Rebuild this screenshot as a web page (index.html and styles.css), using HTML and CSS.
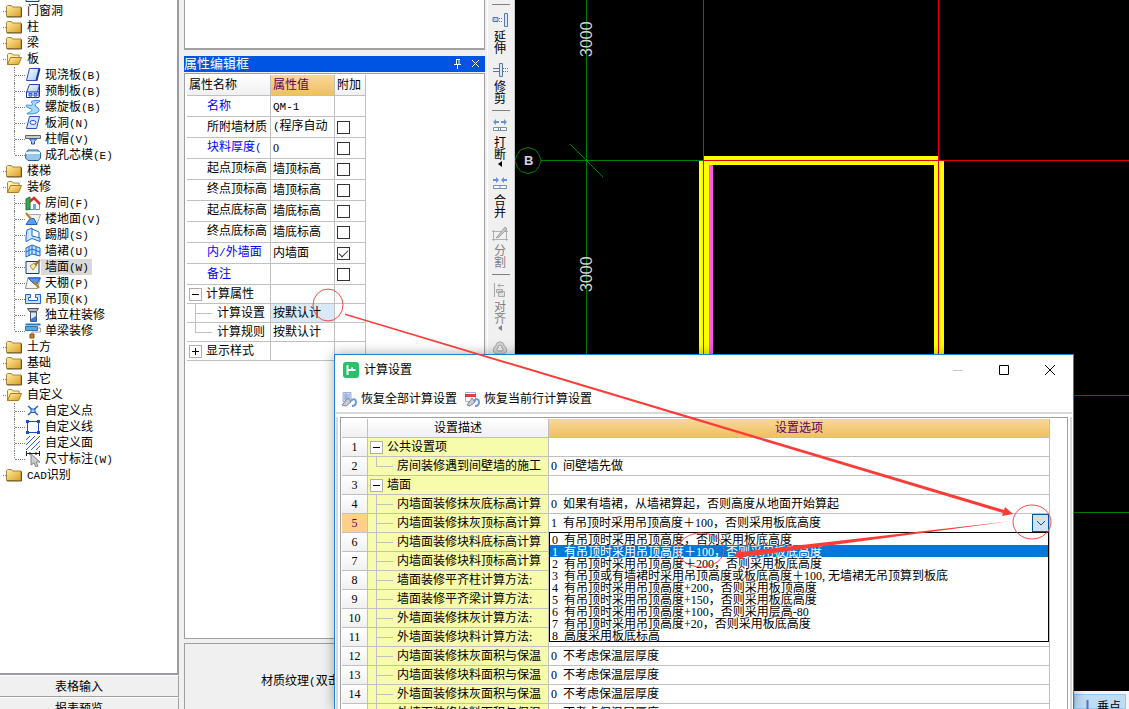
FILE: index.html
```html
<!DOCTYPE html>
<html lang="zh-CN">

<head>
    <meta charset="utf-8">
    <title>计算设置</title>
    <link rel="stylesheet" href="styles.css">
</head>

<body>
    <!-- icon definitions -->
    <svg class="defs" aria-hidden="true">
        <defs>
            <linearGradient id="gold" x1="0" y1="0" x2="1" y2="1">
                <stop offset="0" stop-color="#fff0a8" />
                <stop offset="1" stop-color="#dc9c20" />
            </linearGradient>
            <linearGradient id="sky" x1="0" y1="0" x2="1" y2="1">
                <stop offset="0" stop-color="#ffffff" />
                <stop offset="1" stop-color="#9cc8f5" />
            </linearGradient>
            <symbol id="folder" viewBox="0 0 16 16">
                <path d="M.5 13.500V3.500l1-1h4l1 1.500h8.500v9.500z" fill="url(#gold)" stroke="#a88438" />
                <path d="M15.500 4.500v9.500H1" fill="none" stroke="#6c5420" />
            </symbol>
            <symbol id="open" viewBox="0 0 16 16">
                <path d="M1.500 13.500v-10l1-1h3.500l1 1.500h6v3" fill="#fff0b0" stroke="#a08a50" />
                <path d="M1.500 13.500l3-7h11l-3 7z" fill="url(#gold)" stroke="#a87c1c" />
            </symbol>
            <symbol id="slab" viewBox="0 0 16 16">
                <path d="M4.500 1.500h10l-3 12h-10z" fill="url(#sky)" stroke="#2a50b8" />
                <path d="M11.500 13.500l3-12" stroke="#1a3a9a" stroke-width="2" />
            </symbol>
            <symbol id="precast" viewBox="0 0 16 16">
                <path d="M4.500 1.500h10l-2 8h-11z" fill="url(#sky)" stroke="#2a40b0" />
                <path d="M1.500 9h12.500v5.500H1.500z" fill="#fff" stroke="#1a30a0" />
                <path d="M14.500 1.500v12" stroke="#1a30a0" />
                <path d="M4 10.500h3v2.500H4zM9 10.500h3v2.500H9z" fill="#8cb8ff" stroke="#2a50d8" />
            </symbol>
            <symbol id="spiral" viewBox="0 0 16 16">
                <path d="M6 3c3-2 7-2 9-1-2 2-5 2-5 4s4 2 4 5-4 4-12 4c-1-1 5-2 5-4S1 9 1 7s5 0 6-1 0-2-1-3z" fill="#a8d8fa" stroke="#3a90d8" />
            </symbol>
            <symbol id="hole" viewBox="0 0 16 16">
                <path d="M4.500 1.500h10l-3 12h-10z" fill="#d4e6fc" stroke="#2a50b8" />
                <ellipse cx="8" cy="7.500" rx="3" ry="2" fill="#fff" stroke="#2a50d8" />
            </symbol>
            <symbol id="cap" viewBox="0 0 16 16">
                <path d="M.5 4.500h15v3H.5z" fill="#c8ccd0" stroke="#606468" />
                <path d="M4.500 8h7l-2 2.500v2.500h-3v-2.500z" fill="#a8c8ff" stroke="#2a50c0" />
            </symbol>
            <symbol id="core" viewBox="0 0 16 16">
                <path d="M1 6l2-3h10l2.500 3v5l-2 2.500H3L.5 11z" fill="#98c8e8" stroke="#2a60a0" />
                <path d="M1 6h14" stroke="#e8f6ff" stroke-width="2" />
            </symbol>
            <symbol id="room" viewBox="0 0 16 16">
                <path d="M4 8v6.500h10.500V7" fill="#fff" stroke="#5a90d0" />
                <path d="M3 8l6-5 6 6" fill="none" stroke="#d83028" stroke-width="2.500" />
                <path d="M1 4l4-2v12l-4 1z" fill="#3aa850" stroke="#187030" />
                <path d="M8 9h3v6H8z" fill="#68a8f0" />
            </symbol>
            <symbol id="floor" viewBox="0 0 16 16">
                <path d="M4 3.500h11.500L12 13" fill="#f0f4f8" stroke="#a8a8a8" />
                <path d="M1 13.500l4-6h4l3 6z" fill="#58a0f0" stroke="#2060c0" />
                <path d="M1 2l5 6" stroke="#b08030" stroke-width="2" />
            </symbol>
            <symbol id="skirt" viewBox="0 0 16 16">
                <path d="M1 10l1-7 5-2v8l8 2v3.500l-8-3-6 3z" fill="#d0e8ff" stroke="#1a68d0" />
                <path d="M7 2l7 3v6" fill="none" stroke="#1a68d0" />
            </symbol>
            <symbol id="dado" viewBox="0 0 16 16">
                <path d="M1 5l6-3 8 3v8l-8-2-6 3z" fill="#c4e2ff" stroke="#1a68d0" />
                <path d="M7 2v9M1 9l6-3 8 3M11 4v8M4 4v9" fill="none" stroke="#1a68d0" />
            </symbol>
            <symbol id="wall" viewBox="0 0 16 16">
                <path d="M1 2.500h13v12H1z" fill="#eaf2ff" stroke="#203870" />
                <path d="M5 7l3 4 4-5-3-2z" fill="#f8e8a0" stroke="#b09030" />
                <path d="M10 6l5-5" stroke="#a06820" stroke-width="2" />
            </symbol>
            <symbol id="ceiling" viewBox="0 0 16 16">
                <path d="M3 2.500h12.500l-3 11H.5z" fill="#f4f6f8" stroke="#909498" />
                <path d="M3 3h12l-3 6H9z" fill="#4a98f0" stroke="#1a60c8" />
                <path d="M8 6l6 7" stroke="#b08030" stroke-width="2" />
            </symbol>
            <symbol id="hung" viewBox="0 0 16 16">
                <path d="M.5 3.500h5v3h-2v3h9v-3h-2v-3h5v9H.5z" fill="#c4e2ff" stroke="#1a68d0" />
            </symbol>
            <symbol id="column" viewBox="0 0 16 16">
                <path d="M2.500 1.500h11l-2 3h-7z" fill="#b8bcc0" stroke="#505458" />
                <path d="M5.500 5h6v9.500h-6z" fill="#d8e8ff" stroke="#505870" />
                <path d="M6 12l5-3v5H6z" fill="#3a78e0" />
            </symbol>
            <symbol id="beam" viewBox="0 0 16 16">
                <path d="M.5 .5h15v2H.5z" fill="#2878b8" />
                <path d="M.5 3.500h12v4H.5z" fill="#58a8e0" stroke="#2878b8" />
                <path d="M13 5h2.500v4H7v2" fill="none" stroke="#a0a0a0" />
                <path d="M5 11h4v4H5z" fill="#c88030" stroke="#80501a" />
            </symbol>
            <symbol id="point" viewBox="0 0 16 16">
                <path d="M3 3l10 9M13 3L3 12" stroke="#2060c8" stroke-width="1.500" />
                <path d="M6 6h4v3.500H6z" fill="#a8d0ff" stroke="#2060c8" />
            </symbol>
            <symbol id="line" viewBox="0 0 16 16">
                <path d="M2.500 2.500h11v11h-11z" fill="#fff" stroke="#1850c0" />
                <path d="M1 1h3v3H1zM12 1h3v3h-3zM1 12h3v3H1zM12 12h3v3h-3z" fill="#1850c0" />
            </symbol>
            <symbol id="hatch" viewBox="0 0 16 16">
                <path d="M1 5l4-4M1 10l9-9M1 15L15 1M6 15l9-9M11 15l4-4" stroke="#2a60c8" />
            </symbol>
            <symbol id="dim" viewBox="0 0 16 16">
                <path d="M1.500 0v5M14.500 0v5M2 2.500h12M5 1v3M11 1v3" stroke="#202020" />
                <path d="M6 3l9 8h-4l2 4-2 1-2-4-3 2z" fill="#c8ccd0" stroke="#808488" />
            </symbol>
            <symbol id="restore" viewBox="0 0 16 16">
                <path d="M2 1.500h8v9H2z" fill="#d0dcf4" stroke="#a0b0d4" />
                <path d="M3 4h6M3 6h6M3 8h6M5 2v8" stroke="#8aa4dc" />
                <path d="M1 14l6-7 3 4-5 4z" fill="#c8ccd4" stroke="#808898" />
                <path d="M10 10c2-3 5-2 5 1s-2 4-4 4" fill="none" stroke="#7098d4" stroke-width="2" />
            </symbol>
            <symbol id="restorerow" viewBox="0 0 16 16">
                <path d="M1.500 1.500h10v9h-10z" fill="#fff" stroke="#a0b0d0" />
                <path d="M1 3h11v3H1z" fill="#e04038" />
                <path d="M3 14l5-7 3 4-5 4z" fill="#c8ccd4" stroke="#808898" />
                <path d="M10 10c2-3 5-2 5 1s-2 4-4 4" fill="none" stroke="#7098d4" stroke-width="2" />
            </symbol>
        </defs>
    </svg>

    <div class="app">
        <!-- component tree -->
        <div class="side">
            <div class="tree">
                <ul class="kids first">
                    <li><svg><use href="#wall" /></svg><span>幕墙</span></li>
                </ul>
                <div class="node"><svg><use href="#folder" /></svg><span>门窗洞</span></div>
                <div class="node"><svg><use href="#folder" /></svg><span>柱</span></div>
                <div class="node"><svg><use href="#folder" /></svg><span>梁</span></div>
                <div class="node"><svg><use href="#open" /></svg><span>板</span></div>
                <ul class="kids">
                    <li><svg><use href="#slab" /></svg><span>现浇板<i>(B)</i></span></li>
                    <li><svg><use href="#precast" /></svg><span>预制板<i>(B)</i></span></li>
                    <li><svg><use href="#spiral" /></svg><span>螺旋板<i>(B)</i></span></li>
                    <li><svg><use href="#hole" /></svg><span>板洞<i>(N)</i></span></li>
                    <li><svg><use href="#cap" /></svg><span>柱帽<i>(V)</i></span></li>
                    <li><svg><use href="#core" /></svg><span>成孔芯模<i>(E)</i></span></li>
                </ul>
                <div class="node"><svg><use href="#folder" /></svg><span>楼梯</span></div>
                <div class="node"><svg><use href="#open" /></svg><span>装修</span></div>
                <ul class="kids">
                    <li><svg><use href="#room" /></svg><span>房间<i>(F)</i></span></li>
                    <li><svg><use href="#floor" /></svg><span>楼地面<i>(V)</i></span></li>
                    <li><svg><use href="#skirt" /></svg><span>踢脚<i>(S)</i></span></li>
                    <li><svg><use href="#dado" /></svg><span>墙裙<i>(U)</i></span></li>
                    <li><svg><use href="#wall" /></svg><span class="current">墙面<i>(W)</i></span></li>
                    <li><svg><use href="#ceiling" /></svg><span>天棚<i>(P)</i></span></li>
                    <li><svg><use href="#hung" /></svg><span>吊顶<i>(K)</i></span></li>
                    <li><svg><use href="#column" /></svg><span>独立柱装修</span></li>
                    <li><svg><use href="#beam" /></svg><span>单梁装修</span></li>
                </ul>
                <div class="node"><svg><use href="#folder" /></svg><span>土方</span></div>
                <div class="node"><svg><use href="#folder" /></svg><span>基础</span></div>
                <div class="node"><svg><use href="#folder" /></svg><span>其它</span></div>
                <div class="node"><svg><use href="#open" /></svg><span>自定义</span></div>
                <ul class="kids">
                    <li><svg><use href="#point" /></svg><span>自定义点</span></li>
                    <li><svg><use href="#line" /></svg><span>自定义线</span></li>
                    <li><svg><use href="#hatch" /></svg><span>自定义面</span></li>
                    <li><svg><use href="#dim" /></svg><span>尺寸标注<i>(W)</i></span></li>
                </ul>
                <div class="node"><svg><use href="#folder" /></svg><span><i>CAD</i>识别</span></div>
            </div>
            <div class="tabs">
                <button type="button">表格输入</button>
                <button type="button">报表预览</button>
            </div>
        </div>

        <!-- property editor -->
        <div class="middle">
            <div class="list"></div>
            <div class="caption">
                <span>属性编辑框</span>
                <button type="button" aria-label="固定"><svg width="10" height="10"><path d="M3 .5h4M3.500 1v4M6 1v4M1 5.500h7M4.500 6v4" stroke="#fff" /></svg></button>
                <button type="button" aria-label="关闭"><svg width="10" height="10"><path d="M1 1l7 7M8 1L1 8" stroke="#fff" /></svg></button>
            </div>
            <div class="props">
                <table>
                    <thead>
                        <tr><th class="name">属性名称</th><th class="value">属性值</th><th class="extra">附加</th></tr>
                    </thead>
                    <tbody>
                        <tr><td class="blue">名称</td><td><i>QM-1</i></td><td></td></tr>
                        <tr><td>所附墙材质</td><td class="wrap"><i>(</i>程序自动</td><td><input type="checkbox" aria-label="所附墙材质"></td></tr>
                        <tr><td class="blue wrap">块料厚度<i>(</i></td><td>0</td><td><input type="checkbox" aria-label="块料厚度"></td></tr>
                        <tr><td class="wrap">起点顶标高</td><td>墙顶标高</td><td><input type="checkbox" aria-label="起点顶标高"></td></tr>
                        <tr><td class="wrap">终点顶标高</td><td>墙顶标高</td><td><input type="checkbox" aria-label="终点顶标高"></td></tr>
                        <tr><td class="wrap">起点底标高</td><td>墙底标高</td><td><input type="checkbox" aria-label="起点底标高"></td></tr>
                        <tr><td class="wrap">终点底标高</td><td>墙底标高</td><td><input type="checkbox" aria-label="终点底标高"></td></tr>
                        <tr><td class="blue wrap">内<i>/</i>外墙面</td><td>内墙面</td><td><input type="checkbox" aria-label="内/外墙面" checked></td></tr>
                        <tr><td class="blue">备注</td><td></td><td><input type="checkbox" aria-label="备注"></td></tr>
                        <tr class="low"><td class="group"><button type="button" class="fold open" aria-label="折叠"></button>计算属性</td><td></td><td></td></tr>
                        <tr class="low"><td class="sub">计算设置</td><td class="picked">按默认计</td><td></td></tr>
                        <tr class="low"><td class="sub last">计算规则</td><td>按默认计</td><td></td></tr>
                        <tr class="low"><td class="group"><button type="button" class="fold" aria-label="展开"></button>显示样式</td><td></td><td></td></tr>
                    </tbody>
                </table>
            </div>
            <div class="texture">材质纹理<i>(</i>双击</div>
        </div>

        <!-- edit tools -->
        <div class="tools">
            <hr>
            <button type="button">
                <svg width="16" height="16"><path d="M1 5.500h5v4H1z" fill="#b8d0ee" stroke="#5878a8" /><path d="M7 6.500h4M7 9.500h4" stroke="#5878a8" stroke-dasharray="1 1" /><path d="M12.500 1.500h3v13h-3z" fill="#dce8f8" stroke="#5878a8" /></svg>延伸
            </button>
            <button type="button">
                <svg width="16" height="16"><path d="M7.500 1.500h3v13h-3z" fill="#dce8f8" stroke="#5878a8" /><path d="M1 6.500h6M1 9.500h6" stroke="#5878a8" /><path d="M11 6.500h5M11 9.500h5" stroke="#5878a8" stroke-dasharray="1 1" /></svg>修剪
            </button>
            <hr>
            <button type="button">
                <svg width="16" height="16"><path d="M1 4l3-3v2h3v2H4v2zM15 4l-3-3v2H9v2h3v2z" fill="#6a90d8" /><path d="M1.500 9.500h13v3h-13zM6.500 9.500v3M8.500 9.500v3" fill="#fff" stroke="#7890b0" /></svg>打断<b></b>
            </button>
            <button type="button">
                <svg width="16" height="16"><path d="M7 4L4 1v2H1v2h3v2zM9 4l3-3v2h3v2h-3v2z" fill="#6a90d8" /><path d="M1.500 9.500h13v3h-13zM8 9.500v3" fill="#fff" stroke="#7890b0" /></svg>合并
            </button>
            <button type="button" disabled>
                <svg width="16" height="16"><path d="M0 5.500h16M0 13.500h16M1.500 4v11M14.500 4v11" stroke="#b0b0b0" /><path d="M5 11l8-10 2 2-8 8-3 1z" fill="#c8c8c8" stroke="#a0a0a0" /></svg>分割
            </button>
            <hr>
            <button type="button" disabled>
                <svg width="16" height="16"><path d="M2.500 1v14M6 3.500h6M8 1.500l-2 2 2 2" fill="none" stroke="#a8a8a8" /><path d="M4.500 7.500h6v3h-6zM6.500 9.500h6v5h-6z" fill="#e0e0e0" stroke="#a8a8a8" /></svg>对齐<b></b>
            </button>
            <button type="button" disabled aria-label="偏移">
                <svg width="16" height="16"><path d="M8 2c3 0 4 2 4 4 4 2 3 8-1 8H5c-4 0-5-6-1-8 0-2 1-4 4-4z" fill="#d8d8d8" stroke="#a0a0a0" /><path d="M8 5c2 0 2 2 2 3 2 1 1 3 0 3H6c-1 0-2-2 0-3 0-1 0-3 2-3z" fill="#f0f0f0" stroke="#a0a0a0" /></svg>
            </button>
        </div>

        <!-- drawing -->
        <div class="drawing">
            <svg class="plan">
                <rect x="184" y="161" width="10" height="400" fill="#ff0" />
                <rect x="194" y="161" width="4" height="400" fill="#ff54ff" />
                <rect x="189" y="156" width="235" height="9" fill="#ff0" />
                <rect x="419" y="161" width="10" height="400" fill="#ff0" />
                <g stroke="#008000" fill="none">
                    <path d="M71.500 0v709M0 160.500h188M55 144l33 33M540 512.500h200" />
                    <path d="M13 147.500l7 2 4 5 2 6-2 6-4 5-7 2-7-2-4-5-2-6 2-6 4-5z" fill="#000" />
                </g>
                <path d="M188.500 0v500M423.500 0v500M188 160.500h600M540 395.500h200" stroke="#e00000" />
                <text class="axis" x="9" y="165">B</text>
                <text class="size" transform="translate(77 57) rotate(-90)">3000</text>
                <text class="size" transform="translate(77 292) rotate(-90)">3000</text>
            </svg>
            <div class="snap">
                <button type="button"><svg width="16" height="16"><path d="M8.500 1v13M2 14.500h13" stroke="#4a78c8" stroke-width="2" /></svg>垂点</button>
            </div>
        </div>
    </div>

    <!-- calculation settings dialog -->
    <div class="dialog" role="dialog" aria-label="计算设置">
        <div class="title">
            <svg class="logo" width="16" height="16"><rect width="16" height="16" rx="3" fill="#28c068" /><path d="M4.500 3v10M4.500 8h8M9 5.500v2.500" stroke="#fff" stroke-width="2" fill="none" /></svg>
            <span>计算设置</span>
            <button type="button" aria-label="最小化"><svg width="12" height="12"><path d="M1 6.500h10" stroke="#c8c8c8" /></svg></button>
            <button type="button" aria-label="最大化"><svg width="12" height="12"><path d="M1.500 1.500h9v9h-9z" fill="none" stroke="#000" /></svg></button>
            <button type="button" aria-label="关闭"><svg width="12" height="12"><path d="M1 1l10 10M11 1L1 11" stroke="#000" /></svg></button>
        </div>
        <div class="actions">
            <button type="button"><svg width="16" height="16"><use href="#restore" /></svg>恢复全部计算设置</button>
            <button type="button"><svg width="16" height="16"><use href="#restorerow" /></svg>恢复当前行计算设置</button>
        </div>
        <div class="frame">
            <table>
                <thead>
                    <tr><th class="no"></th><th class="desc">设置描述</th><th class="option">设置选项</th></tr>
                </thead>
                <tbody>
                    <tr><th>1</th><td class="group"><button type="button" class="fold open" aria-label="折叠"></button>公共设置项</td><td></td></tr>
                    <tr><th>2</th><td class="sub last">房间装修遇到间壁墙的施工</td><td>0  间壁墙先做</td></tr>
                    <tr><th>3</th><td class="group"><button type="button" class="fold open" aria-label="折叠"></button>墙面</td><td></td></tr>
                    <tr><th>4</th><td class="sub">内墙面装修抹灰底标高计算</td><td>0  如果有墙裙，从墙裙算起，否则高度从地面开始算起</td></tr>
                    <tr class="active"><th>5</th><td class="sub">内墙面装修抹灰顶标高计算</td>
                        <td class="edit">1&nbsp;&nbsp;有吊顶时采用吊顶高度＋100，否则采用板底高度
                            <button type="button" class="drop" aria-label="展开选项"><svg width="10" height="6"><path d="M1 1l4 4 4-4" fill="none" stroke="#404040" /></svg></button>
                            <select class="choices" size="9" aria-label="设置选项">
                                <option>0&nbsp;&nbsp;有吊顶时采用吊顶高度，否则采用板底高度</option>
                                <option selected>1&nbsp;&nbsp;有吊顶时采用吊顶高度＋100，否则采用板底高度</option>
                                <option>2&nbsp;&nbsp;有吊顶时采用吊顶高度＋200，否则采用板底高度</option>
                                <option>3&nbsp;&nbsp;有吊顶或有墙裙时采用吊顶高度或板底高度＋100,&nbsp;无墙裙无吊顶算到板底</option>
                                <option>4&nbsp;&nbsp;有吊顶时采用吊顶高度+200，否则采用板顶高度</option>
                                <option>5&nbsp;&nbsp;有吊顶时采用吊顶高度+150，否则采用板底高度</option>
                                <option>6&nbsp;&nbsp;有吊顶时采用吊顶高度+100，否则采用层高-80</option>
                                <option>7&nbsp;&nbsp;有吊顶时采用吊顶高度+20，否则采用板底高度</option>
                                <option>8&nbsp;&nbsp;高度采用板底标高</option>
                            </select>
                        </td>
                    </tr>
                    <tr><th>6</th><td class="sub">内墙面装修块料底标高计算</td><td></td></tr>
                    <tr><th>7</th><td class="sub">内墙面装修块料顶标高计算</td><td></td></tr>
                    <tr><th>8</th><td class="sub">墙面装修平齐柱计算方法:</td><td></td></tr>
                    <tr><th>9</th><td class="sub">墙面装修平齐梁计算方法:</td><td></td></tr>
                    <tr><th>10</th><td class="sub">外墙面装修抹灰计算方法:</td><td></td></tr>
                    <tr><th>11</th><td class="sub">外墙面装修块料计算方法:</td><td></td></tr>
                    <tr><th>12</th><td class="sub">内墙面装修抹灰面积与保温</td><td>0  不考虑保温层厚度</td></tr>
                    <tr><th>13</th><td class="sub">内墙面装修块料面积与保温</td><td>0  不考虑保温层厚度</td></tr>
                    <tr><th>14</th><td class="sub">外墙面装修抹灰面积与保温</td><td>0  不考虑保温层厚度</td></tr>
                    <tr><th>15</th><td class="sub">外墙面装修块料面积与保温</td><td>0  不考虑保温层厚度</td></tr>
                </tbody>
            </table>
        </div>
    </div>

    <!-- red marks over everything -->
    <svg class="marks" aria-hidden="true">
        <g fill="none" stroke="#f04848">
            <ellipse cx="328" cy="305" rx="15" ry="16" />
            <ellipse cx="1032" cy="522" rx="19" ry="17" />
            <ellipse cx="701" cy="550" rx="23" ry="17" />
        </g>
        <g fill="#fc3c38">
            <path d="M345 313.500L1004 510l1-3 8 7-11 2 1-3L345 315z" />
            <path d="M1012 521L741 552v-3l-8 7 11 4-1-3z" />
        </g>
    </svg>
</body>

</html>
```
FILE: styles.css
```css
* {
    box-sizing: border-box;
}

body {
    margin: 0;
    height: 100vh;
    overflow: hidden;
    position: relative;
    background: #f0f0f0;
    color: #000;
    font: 12px/16px "Liberation Serif", "Noto Sans CJK SC", serif;
}

button {
    margin: 0;
    padding: 0;
    border: 0;
    background: none;
    color: inherit;
    font: inherit;
}

svg {
    display: block;
    flex: none;
}

/* half-width characters */
i {
    font: 11px/12px "Liberation Mono", monospace;
}

table {
    table-layout: fixed;
    border-spacing: 0;
}

td, th {
    padding: 0 0 0 2px;
    border-right: 1px solid #c0c0c0;
    border-bottom: 1px solid #c0c0c0;
    overflow: hidden;
    white-space: pre;
    text-align: left;
    font-weight: normal;
}

.defs {
    position: absolute;
    width: 0;
    height: 0;
}

.app {
    display: flex;
    height: 100%;
}

/* tree */
.side {
    display: flex;
    flex-direction: column;
    flex: none;
    width: 179px;
    margin-right: 5px;
}

.tree {
    flex: 1;
    min-height: 0;
    overflow: hidden;
    background: #fff;
    border-right: 2px solid #9a9ca2;
    border-bottom: 2px solid #9a9ca2;
}

.tree svg {
    width: 16px;
    height: 16px;
}

.node, .kids li {
    display: flex;
    height: 16px;
}

.node {
    padding-left: 3px;
}

.node::before {
    content: "";
    width: 3px;
    height: 8px;
    border-bottom: 1px dotted #808080;
}

.node span {
    padding-left: 5px;
}

.kids {
    margin: 0;
    padding: 0 0 0 14px;
    list-style: none;
}

.kids.first {
    margin-top: -13px;
}

.kids li {
    border-left: 1px dotted #808080;
}

.kids li:last-child {
    border-left-color: transparent;
    background: repeating-linear-gradient(#808080 0 1px, transparent 1px 2px) no-repeat border-box 0 0 / 1px 8px;
}

.kids li::before {
    content: "";
    width: 10px;
    height: 8px;
    border-bottom: 1px dotted #808080;
}

.kids span {
    padding: 0 3px 0 4px;
}

.kids .current {
    background: #d9d9d9;
}

.tabs {
    flex: none;
    height: 34px;
    overflow: hidden;
}

.tabs button {
    display: block;
    width: 100%;
    height: 22px;
    padding: 2px 20px 0 0;
    border-top: 1px solid #fff;
    border-right: 1px solid #a0a0a0;
    border-bottom: 1px solid #a0a0a0;
}

/* property editor */
.middle {
    display: flex;
    flex-direction: column;
    flex: none;
    width: 301px;
    margin-right: 2px;
}

.list {
    flex: none;
    height: 50px;
    margin-bottom: 6px;
    background: #fff;
    border: solid #a0a0a0;
    border-width: 0 1px 2px 1px;
}

.caption {
    display: flex;
    align-items: center;
    height: 16px;
    margin-bottom: 1px;
    background: #0054e3;
    color: #fff;
}

.caption span {
    flex: 1;
    font-size: 13px;
}

.caption button {
    margin-right: 4px;
    padding-left: 4px;
}

.props {
    flex: 1;
    min-height: 0;
    padding: 1px 1px 1px 2px;
    margin-bottom: 4px;
    overflow: hidden;
    background: #fff;
    border: 1px solid #a0a0a0;
}

.props table {
    width: 179px;
}

.props tr {
    height: 21px;
}

.props .low, .props .low td {
    height: 19px;
}

.props thead th {
    background: linear-gradient(#fff, #f0f0f0);
}

.props .name {
    width: 84px;
}

.props .value {
    width: 64px;
}

.props .extra {
    width: 31px;
}

.props thead .value, .frame thead .option {
    background: linear-gradient(#f8d79a, #f0c060);
    color: #600060;
}

.props td:first-child {
    padding-left: 20px;
}

.props td:first-child.group, .frame td.group {
    padding-left: 2px;
}

.props td:first-child.sub {
    padding-left: 30px;
}

.props .wrap {
    padding-bottom: 3px;
}

.props .blue {
    color: #0000ff;
}

.props .picked {
    background: #d9e9f7;
}

.props input {
    appearance: none;
    display: block;
    width: 13px;
    height: 13px;
    margin: 0;
    border: 1px solid #333;
    background: #fff;
}

.props input:checked::before {
    content: "";
    display: block;
    width: 8px;
    height: 4px;
    margin: 2px 1px;
    border: solid #333;
    border-width: 0 0 1px 1px;
    transform: rotate(-45deg);
}

.fold {
    display: inline-block;
    width: 13px;
    height: 13px;
    margin: 2px 4px 0 0;
    vertical-align: top;
    border: 1px solid #b0b0b0;
    background: linear-gradient(#000, #000) no-repeat center / 7px 1px,
        linear-gradient(#000, #000) no-repeat center / 1px 7px, #fff;
}

.fold.open {
    background: linear-gradient(#000, #000) no-repeat center / 7px 1px, #fff;
}

/* branch lines of the grids */
.sub {
    background: linear-gradient(#c0c0c0, #c0c0c0) no-repeat 8px 0 / 1px 100%,
        linear-gradient(#c0c0c0, #c0c0c0) no-repeat 8px 9px / 17px 1px;
}

.sub.last {
    background: linear-gradient(#c0c0c0, #c0c0c0) no-repeat 8px 0 / 1px 9px,
        linear-gradient(#c0c0c0, #c0c0c0) no-repeat 8px 9px / 17px 1px;
}

.texture {
    flex: none;
    height: 66px;
    padding: 29px 0 0 76px;
    white-space: nowrap;
    overflow: hidden;
    border: 1px solid #a0a0a0;
    border-bottom: 0;
}

/* edit tools */
.tools {
    flex: none;
    width: 28px;
    padding-top: 4px;
    overflow: hidden;
    border-left: 1px solid #fff;
    border-right: 1px solid #c8c8c8;
    line-height: 12px;
}

.tools hr {
    height: 1px;
    margin: 2px 4px 3px;
    border: 0;
    background: #808080;
}

.tools hr:first-child {
    margin-top: 0;
}

.tools button {
    display: block;
    width: 12px;
    margin-left: 6px;
    padding: 4px 0;
    font-family: "Noto Sans CJK SC", sans-serif;
    word-break: break-all;
}

.tools button:disabled {
    color: #808080;
}

.tools svg {
    margin: 0 -2px 2px;
}

.tools b {
    display: block;
    width: 4px;
    height: 8px;
    margin-left: 4px;
    background: currentColor;
    clip-path: polygon(100% 1px, 100% 7px, 0 4px);
}

/* drawing */
.drawing {
    display: flex;
    flex-direction: column;
    flex: 1;
    min-width: 0;
    background: #000;
}

.plan {
    flex: 1;
    width: 100%;
    min-height: 0;
}

.plan text {
    fill: #d4d4d4;
    font-family: "Liberation Sans", sans-serif;
}

.axis {
    font-size: 13px;
    font-weight: bold;
}

.size {
    font-size: 16px;
}

.snap {
    display: flex;
    justify-content: flex-end;
    height: 18px;
    overflow: hidden;
    background: #f4f4f8;
    padding-top: 3px;
}

.snap button {
    display: flex;
    gap: 2px;
    width: 52px;
    margin-right: 3px;
    padding: 4px 0 0 4px;
    border: 1px solid #90c8f6;
    background: #c0dcf3;
    white-space: nowrap;
}

/* dialog */
.dialog {
    position: absolute;
    top: 354px;
    right: 55px;
    bottom: 0;
    left: 334px;
    display: flex;
    flex-direction: column;
    background: #fff;
    border: 1px solid #1883d7;
    border-bottom: 0;
    box-shadow: 0 0 12px rgba(0, 0, 0, 0.35);
}

.title {
    display: flex;
    flex: none;
    align-items: center;
    height: 30px;
    padding-left: 8px;
}

.title span {
    flex: 1;
    padding-left: 5px;
}

.title button {
    display: flex;
    justify-content: center;
    width: 46px;
}

.actions {
    display: flex;
    flex: none;
    gap: 7px;
    height: 29px;
    padding-left: 5px;
    margin: 0 1px 3px;
    border-bottom: 2px solid #d8d8d8;
}

.actions button {
    display: flex;
    align-items: center;
    gap: 4px;
}

.frame {
    flex: 1;
    min-height: 0;
    margin: 0 5px;
    padding: 1px 17px 0 1px;
    overflow: hidden;
    border: 1px solid #a0a0a0;
    border-bottom: 0;
    box-shadow: 2px 0 #fff, -2px 0 #fff, 4px 0 #d8d8d8, -4px 0 #d8d8d8;
}

.frame table {
    width: 100%;
}

.frame tr {
    height: 19px;
}

.frame th, .frame td {
    height: 19px;
}

.frame th {
    padding: 0;
    text-align: center;
    background: linear-gradient(#fff, #f0f0f0);
}

.frame .no {
    width: 26px;
}

.frame .desc {
    width: 181px;
}

.frame .active th {
    background: #ffd08a;
    color: #600060;
}

.frame .group, .frame .sub {
    background-color: #f7fbac;
}

.frame td.sub {
    padding-left: 29px;
}

.frame .edit {
    position: relative;
    overflow: visible;
    white-space: nowrap;
}

.drop {
    position: absolute;
    top: 0;
    right: 0;
    display: flex;
    align-items: center;
    justify-content: center;
    width: 17px;
    height: 18px;
    background: #cce4f7;
    border: 1px solid #005499;
}

.choices {
    position: absolute;
    top: 18px;
    left: 0;
    width: 100%;
    height: 110px;
    margin: 0;
    padding: 0;
    overflow: hidden;
    border: 1px solid #000;
    border-radius: 0;
    outline: 0;
    background: #fff;
    color: #000;
    font: inherit;
}

/* rows are tighter than the text line, so centre the text in them */
.choices option {
    display: flex;
    align-items: center;
    height: 12px;
    min-height: 0;
    padding: 0 0 0 2px;
}

.choices option:checked {
    background: linear-gradient(#0078d7, #0078d7);
    color: #fff;
}

.marks {
    position: absolute;
    top: 0;
    left: 0;
    width: 100%;
    height: 100%;
    pointer-events: none;
}
```
